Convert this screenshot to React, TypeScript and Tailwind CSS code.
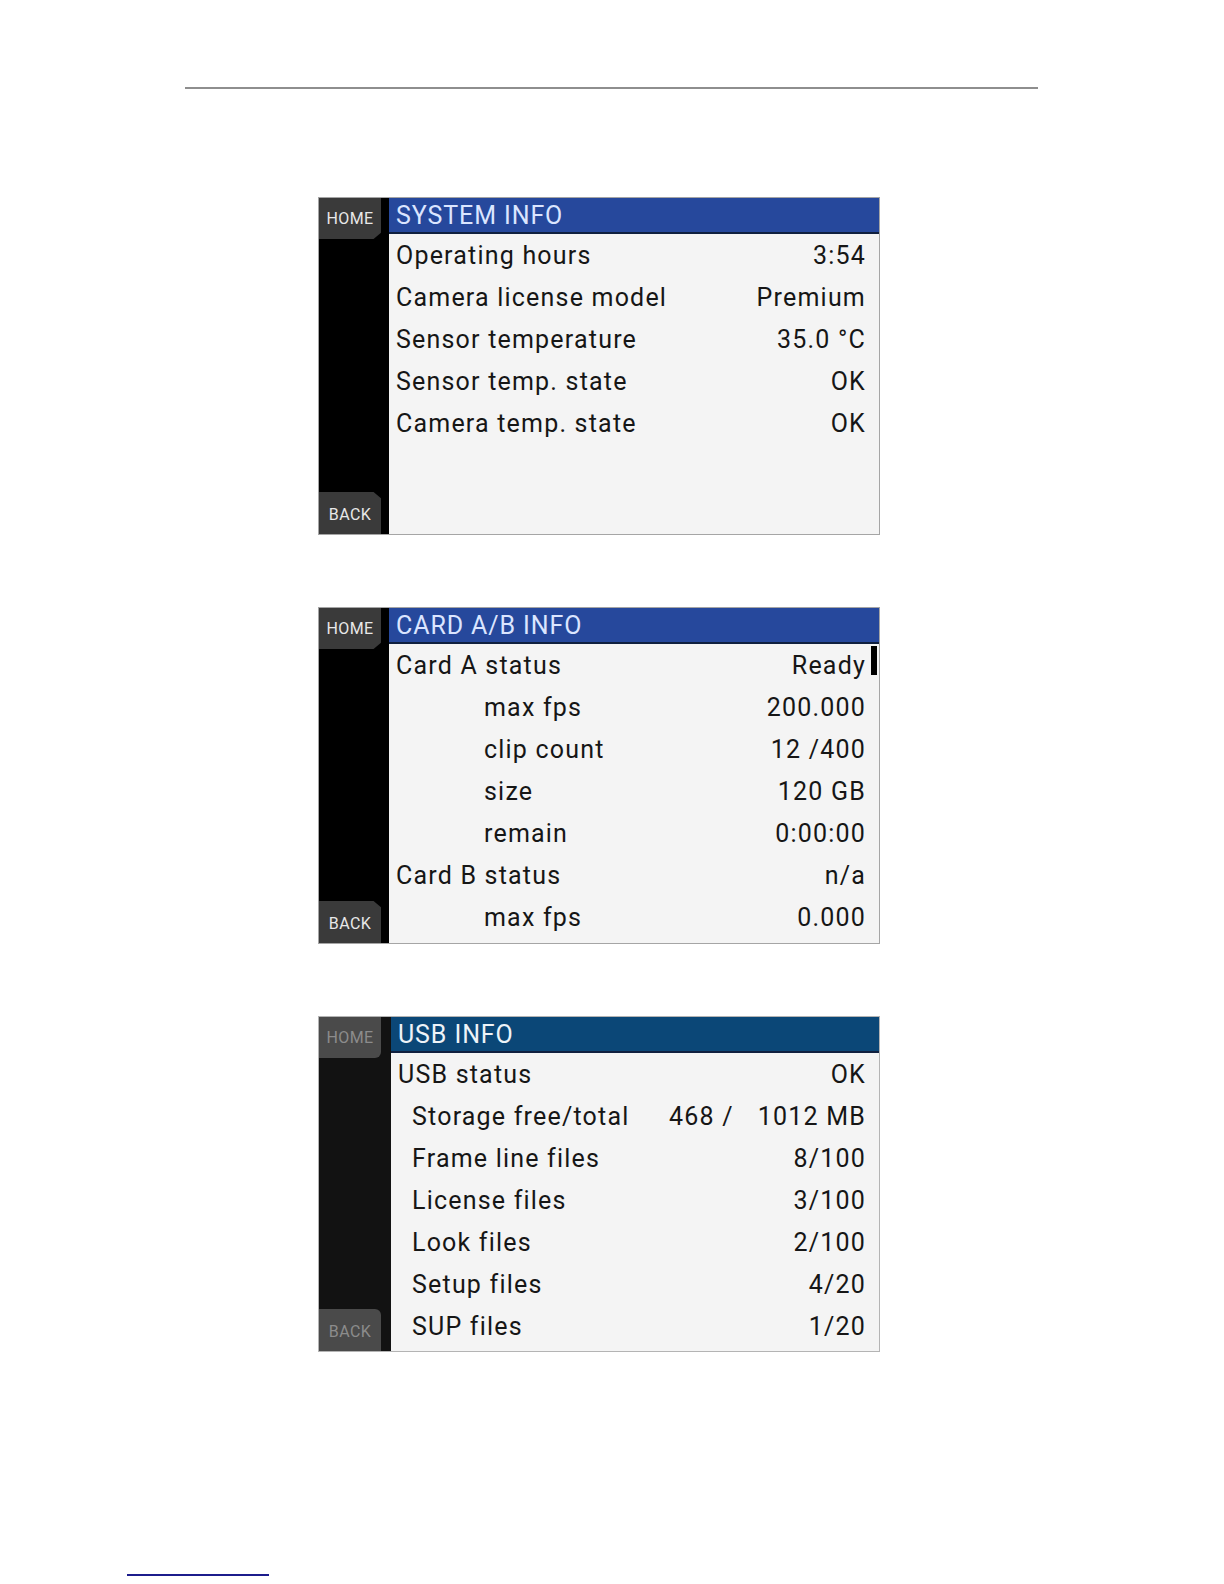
import React from "react";

type Row = { label: string; value: React.ReactNode; indent?: boolean; mark?: boolean };

interface PanelProps {
  title: string;
  rows: Row[];
  variant?: "active" | "dim";
  indentClass?: string;
}

const FONT = { fontFamily: "Roboto, 'Liberation Sans', sans-serif" };

function Panel({ title, rows, variant = "active", indentClass = "pl-[95px]" }: PanelProps) {
  const dim = variant === "dim";
  return (
    <div
      className={`flex w-[562px] border ${dim ? "border-[#b4b4b4]" : "border-[#a5a5a5]"}`}
      style={FONT}
    >
      {/* side keys */}
      <div className={`flex w-[70px] shrink-0 flex-col justify-between ${dim ? "bg-[#121212] w-[72px]" : "bg-black"}`}>
        <div
          className={`flex h-[41px] w-[62px] items-center justify-center text-[16px] tracking-[0.4px] ${
            dim ? "bg-[#4a4a4a] text-[#8c8c8c] rounded-br-[6px]" : "bg-[#3a3a3a] text-[#e8e8e8]"
          }`}
          style={dim ? undefined : { clipPath: "polygon(0 0,100% 0,100% 85%,88% 100%,0 100%)" }}
        >
          HOME
        </div>
        <div
          className={`flex h-[42px] w-[62px] items-center justify-center pt-[4px] text-[16px] tracking-[0.4px] ${
            dim ? "bg-[#4a4a4a] text-[#8c8c8c] rounded-tr-[6px]" : "bg-[#3a3a3a] text-[#e8e8e8]"
          }`}
          style={dim ? undefined : { clipPath: "polygon(0 0,88% 0,100% 15%,100% 100%,0 100%)" }}
        >
          BACK
        </div>
      </div>

      {/* main */}
      <div className="flex flex-1 flex-col bg-[#f4f4f4]">
        <div
          className={`flex h-[36px] items-center border-b-[2px] border-[#10203f] px-[7px] text-[25px] leading-none tracking-[0.9px] ${
            dim ? "bg-[#0b4777] text-[#eef3f8]" : "bg-[#26489c] text-[#dbe5ff]"
          }`}
        >
          {title}
        </div>
        <div className="flex-1">
          {rows.map((r, i) => (
            <div
              key={i}
              className={`relative flex h-[42px] items-center justify-between pr-[14px] text-[25px] leading-none tracking-[1.2px] text-[#161616] ${
                r.indent ? indentClass : "pl-[7px]"
              }`}
            >
              <span>{r.label}</span>
              <span className="-mr-[1px]">{r.value}</span>
              {r.mark && <span className="absolute right-[2px] top-[2px] h-[29px] w-[6px] bg-black" />}
            </div>
          ))}
        </div>
      </div>
    </div>
  );
}

export default function App() {
  return (
    <div className="relative min-h-[1584px] w-[1224px] bg-white">
      <div className="pt-[87px]">
        <div className="ml-[185px] h-[2px] w-[853px] bg-[#8e8e8e]" />
      </div>

      <div className="ml-[318px] mt-[108px] flex flex-col gap-[72px]">
        <div className="h-[338px] flex">
          <Panel
            title="SYSTEM INFO"
            rows={[
              { label: "Operating hours", value: "3:54" },
              { label: "Camera license model", value: "Premium" },
              { label: "Sensor temperature", value: "35.0 °C" },
              { label: "Sensor temp. state", value: "OK" },
              { label: "Camera temp. state", value: "OK" },
            ]}
          />
        </div>
        <div className="h-[337px] flex">
          <Panel
            title="CARD A/B INFO"
            rows={[
              { label: "Card A status", value: "Ready", mark: true },
              { label: "max fps", value: "200.000", indent: true },
              { label: "clip count", value: "12 /400", indent: true },
              { label: "size", value: "120 GB", indent: true },
              { label: "remain", value: "0:00:00", indent: true },
              { label: "Card B status", value: "n/a" },
              { label: "max fps", value: "0.000", indent: true },
            ]}
          />
        </div>
        <div className="h-[336px] flex">
          <Panel
            variant="dim"
            title="USB INFO"
            indentClass="pl-[21px]"
            rows={[
              { label: "USB status", value: "OK" },
              {
                label: "Storage free/total",
                value: (
                  <span className="flex gap-[24px]">
                    <span>468 /</span>
                    <span>1012 MB</span>
                  </span>
                ),
                indent: true,
              },
              { label: "Frame line files", value: "8/100", indent: true },
              { label: "License files", value: "3/100", indent: true },
              { label: "Look files", value: "2/100", indent: true },
              { label: "Setup files", value: "4/20", indent: true },
              { label: "SUP files", value: "1/20", indent: true },
            ]}
          />
        </div>
      </div>

      <div className="absolute left-[127px] top-[1574px] h-[2px] w-[142px] bg-[#1c1c8c]" />
    </div>
  );
}
